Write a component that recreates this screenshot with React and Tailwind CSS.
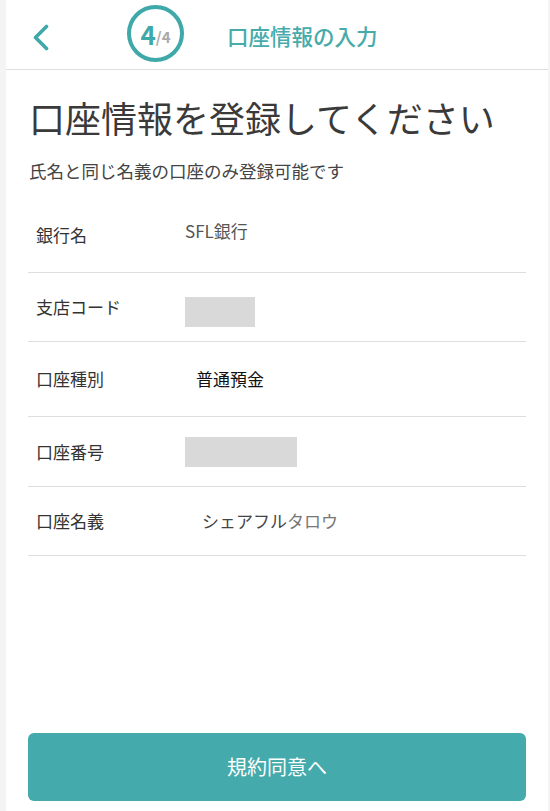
const rows = [
    { label: "銀行名", h: "h-[75px]" },
    { label: "支店コード", h: "h-[69px]" },
    { label: "口座種別", h: "h-[75px]" },
    { label: "口座番号", h: "h-[70px]" },
    { label: "口座名義", h: "h-[69px]" },
]

function RowValue({ index }) {
    if (index === 0) return <span className="text-[#555] pb-[8px]">SFL銀行</span>
    if (index === 1) return <div className="w-[70px] h-[30px] bg-[#d9d9d9] mt-[10px]" />
    if (index === 2) return <span className="text-[#111] ml-[11px]">普通預金</span>
    if (index === 3) return <div className="w-[112px] h-[30px] bg-[#d9d9d9]" />
    return (
        <span className="ml-[17px] text-[#444]">
            シェアフル<span className="text-[#777]">タロウ</span>
        </span>
    )
}

export default function App() {
    return (
        <div
            className="min-h-[811px] bg-[#f4f4f4] flex"
            style={{ fontFamily: '"Noto Sans CJK JP", "Noto Sans", sans-serif' }}
        >
            <div className="ml-[6px] mr-[2px] flex-1 bg-white flex flex-col min-h-[811px]">
                {/* Header */}
                <div className="h-[70px] border-b border-[#dedede] flex items-center shrink-0">
                    <svg className="ml-[26px] mt-[6px]" width="17" height="27" viewBox="0 0 17 27" fill="none">
                        <polyline points="14.5,2.5 3.5,13.5 14.5,24.5" stroke="#3fa8a8" strokeWidth="3.6" strokeLinecap="round" strokeLinejoin="round" />
                    </svg>
                    <div className="ml-[78px] -mt-[2px] w-[57px] h-[57px] rounded-full border-[4px] border-[#3fa8a8] flex items-center justify-center">
                        <span className="text-[26px] font-bold text-[#3fa8a8] leading-none">4</span>
                        <span className="text-[15px] font-bold text-[#aaa] leading-none mt-[6px]">/4</span>
                    </div>
                    <div className="ml-[43px] mt-[4px] text-[21.5px] font-medium text-[#47abab]">口座情報の入力</div>
                </div>

                {/* Content */}
                <div className="px-[22px] flex flex-col flex-1">
                    <h1 className="mt-[25px] ml-[1px] text-[36px] leading-[44px] text-[#3a3a3a]">
                        口座情報を登録してください
                    </h1>
                    <p className="mt-[19px] ml-[1px] text-[17.5px] leading-[26px] text-[#444]">
                        氏名と同じ名義の口座のみ登録可能です
                    </p>

                    <div className="mt-[14px] flex flex-col">
                        {rows.map((r, i) => (
                            <div key={r.label} className={`${r.h} flex items-center border-b border-[#dedede] text-[17px]`}>
                                <div className="w-[157px] pl-[8px] text-[#333] shrink-0">{r.label}</div>
                                <RowValue index={i} />
                            </div>
                        ))}
                    </div>

                    {/* Button */}
                    <button className="mt-auto mb-[10px] h-[68px] w-full rounded-[6px] bg-[#45aaab] text-white text-[20px]">
                        規約同意へ
                    </button>
                </div>
            </div>
        </div>
    )
}
